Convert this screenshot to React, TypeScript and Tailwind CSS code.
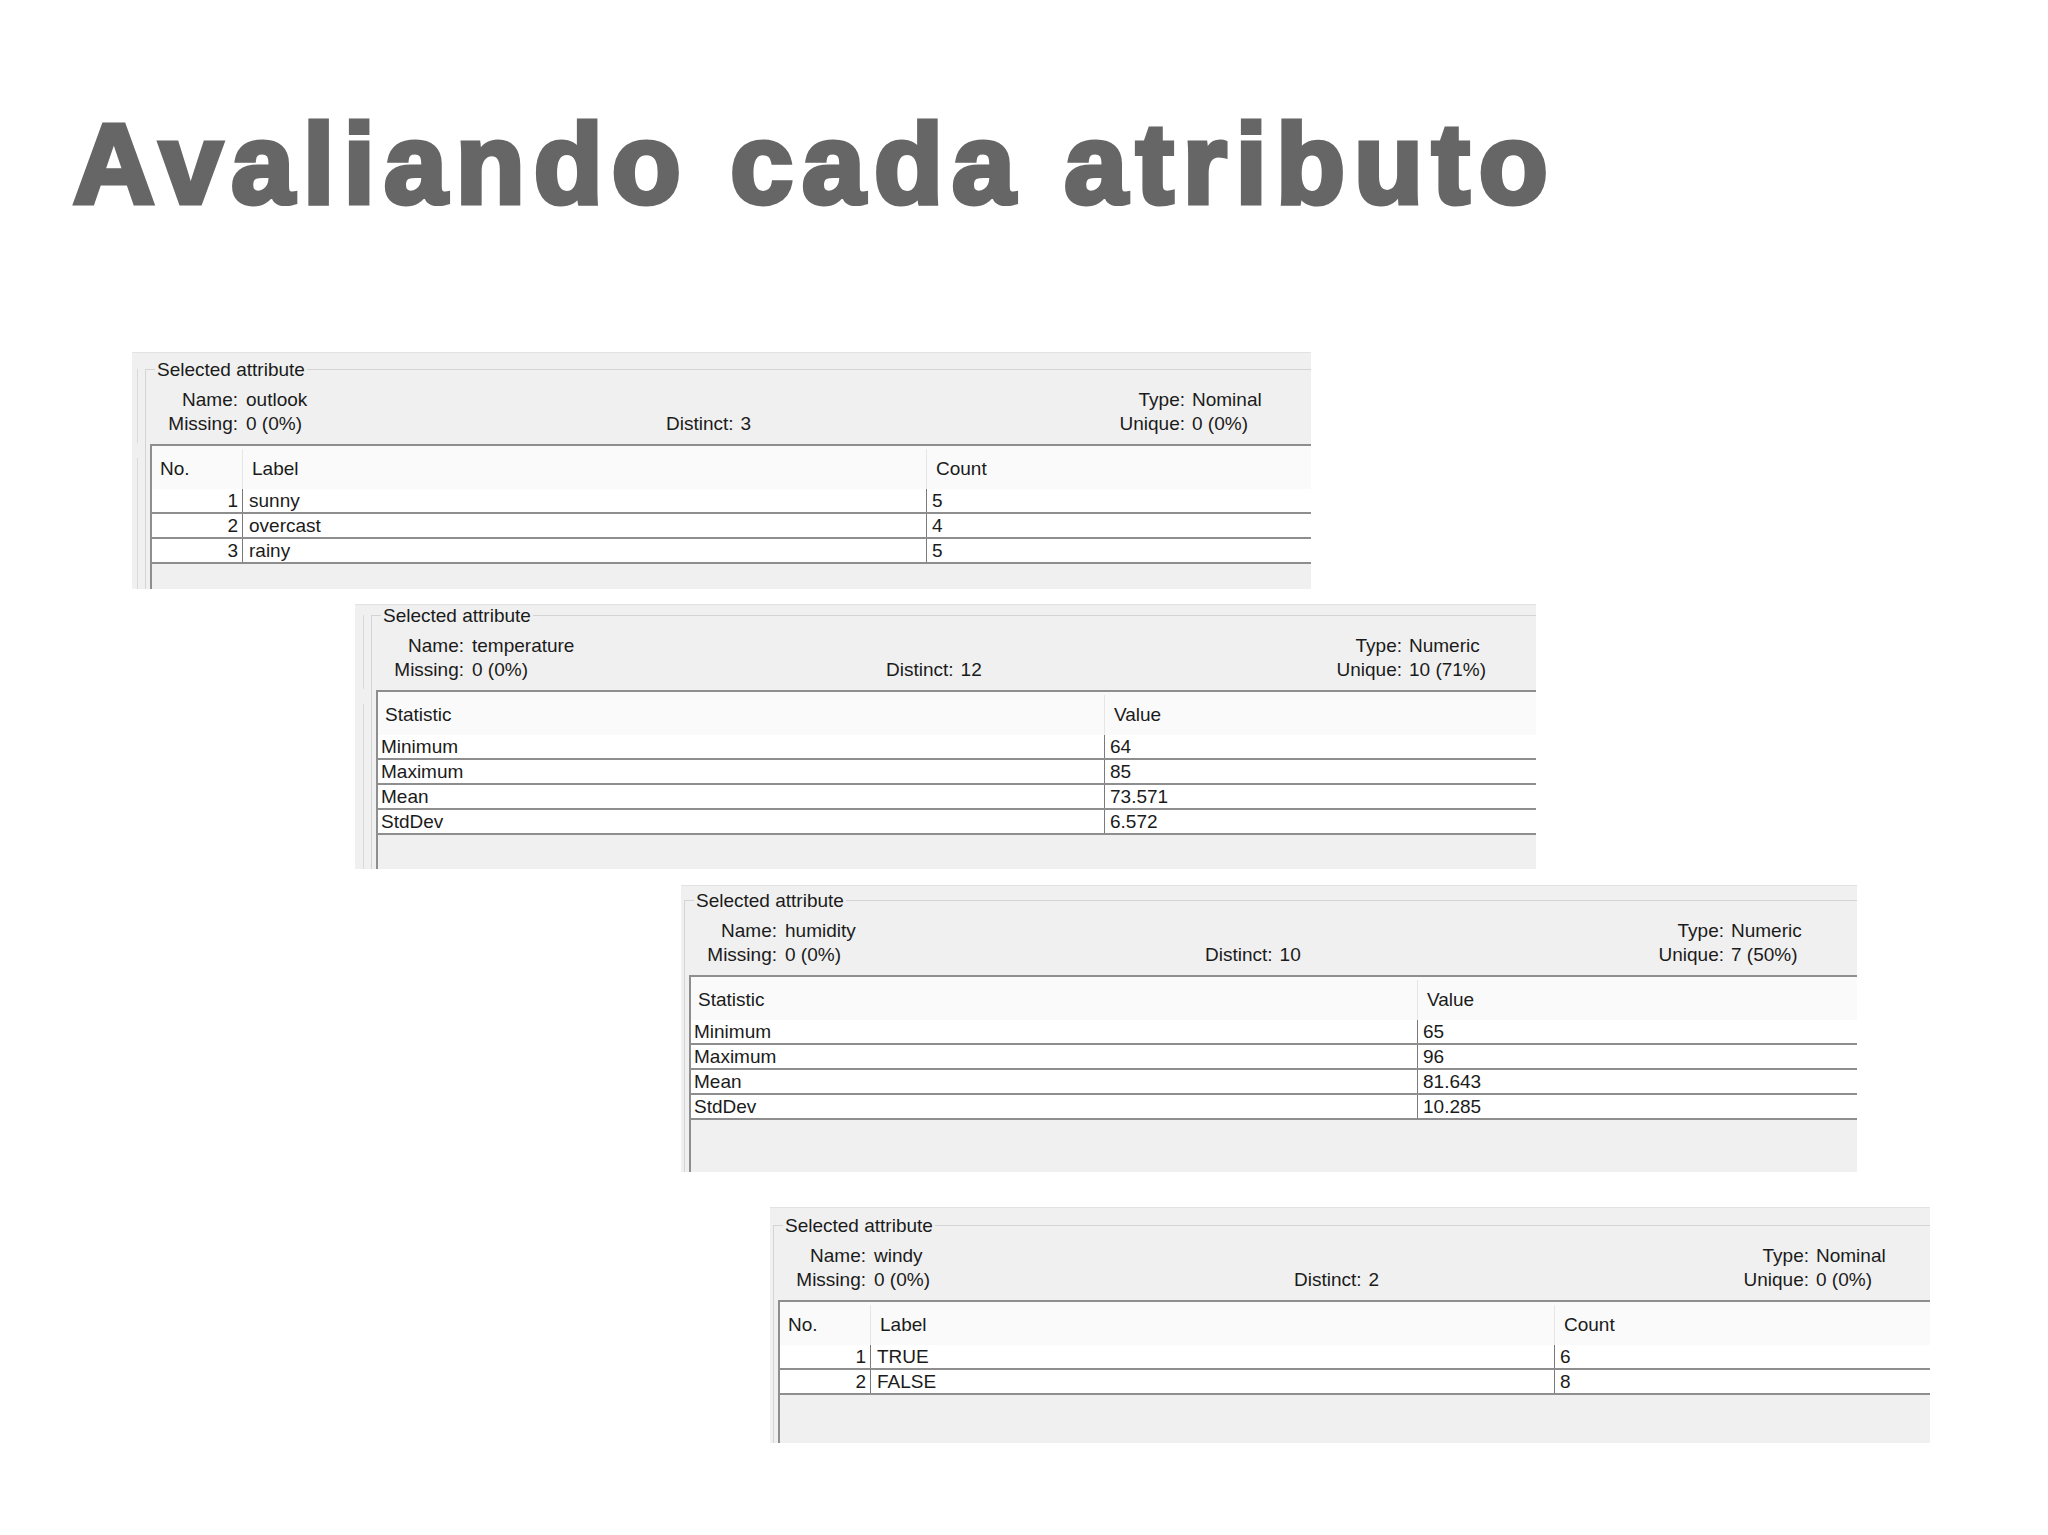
import React from "react"

type Panel = {
  key: string
  wrap: string
  gutter: string
  top: string
  line?: string
  valueCol: string
  spacer: string
  name: string
  missing: string
  distinct: string
  type: string
  unique: string
  numeric: boolean
  rows: string[][]
}

const panels: Panel[] = [
  {
    key: "outlook",
    wrap: "ml-[132px] mt-[131px] w-[1179px] h-[237px]",
    gutter: "w-[13px]",
    top: "pt-[16px]",
    line: "ml-[5px]",
    valueCol: "w-[420px]",
    spacer: "w-[420px]",
    name: "outlook",
    missing: "0 (0%)",
    distinct: "3",
    type: "Nominal",
    unique: "0 (0%)",
    numeric: false,
    rows: [
      ["1", "sunny", "5"],
      ["2", "overcast", "4"],
      ["3", "rainy", "5"],
    ],
  },
  {
    key: "temperature",
    wrap: "ml-[355px] mt-[15px] w-[1181px] h-[265px]",
    gutter: "w-[16px]",
    top: "pt-[10px]",
    line: "ml-[8px]",
    valueCol: "w-[414px]",
    spacer: "w-[417px]",
    name: "temperature",
    missing: "0 (0%)",
    distinct: "12",
    type: "Numeric",
    unique: "10 (71%)",
    numeric: true,
    rows: [
      ["Minimum", "64"],
      ["Maximum", "85"],
      ["Mean", "73.571"],
      ["StdDev", "6.572"],
    ],
  },
  {
    key: "humidity",
    wrap: "ml-[681px] mt-[16px] w-[1176px] h-[287px]",
    gutter: "w-[3px]",
    top: "pt-[14px]",
    valueCol: "w-[420px]",
    spacer: "w-[420px]",
    name: "humidity",
    missing: "0 (0%)",
    distinct: "10",
    type: "Numeric",
    unique: "7 (50%)",
    numeric: true,
    rows: [
      ["Minimum", "65"],
      ["Maximum", "96"],
      ["Mean", "81.643"],
      ["StdDev", "10.285"],
    ],
  },
  {
    key: "windy",
    wrap: "ml-[770px] mt-[35px] w-[1160px] h-[236px]",
    gutter: "w-[3px]",
    top: "pt-[17px]",
    valueCol: "w-[420px]",
    spacer: "w-[416px]",
    name: "windy",
    missing: "0 (0%)",
    distinct: "2",
    type: "Nominal",
    unique: "0 (0%)",
    numeric: false,
    rows: [
      ["1", "TRUE", "6"],
      ["2", "FALSE", "8"],
    ],
  },
]

function AttributePanel({ p }: { p: Panel }) {
  return (
    <div className={`flex shrink-0 overflow-hidden border-t border-[#e2e2e2] bg-[#f0f0f0] ${p.wrap}`}>
      {/* left gutter, a cut-off neighbour border */}
      <div className={`flex shrink-0 flex-col ${p.gutter} ${p.top}`}>
        {p.line && (
          <>
            <div className={`h-[74px] w-px bg-[#d9d9d9] ${p.line}`} />
            <div className={`mt-[15px] w-px flex-1 bg-[#d9d9d9] ${p.line}`} />
          </>
        )}
      </div>

      <div className={`flex flex-1 flex-col ${p.top}`}>
        <div className="relative flex flex-1 flex-col border-l border-t border-[#d4d4d4] pl-[4px]">
          <span className="absolute left-[9px] top-[-12px] bg-[#f0f0f0] px-[2px] leading-[24px]">
            Selected attribute
          </span>

          <div className="pt-[18px] pb-[8px]">
            <div className="flex h-[24px] items-center whitespace-nowrap">
              <span className="w-[88px] shrink-0 text-right">Name:</span>
              <span className={`ml-[8px] shrink-0 ${p.valueCol}`}>{p.name}</span>
              <span className={`shrink-0 ${p.spacer}`} />
              <span className="w-[99px] shrink-0 text-right">Type:</span>
              <span className="ml-[7px]">{p.type}</span>
            </div>
            <div className="flex h-[24px] items-center whitespace-nowrap">
              <span className="w-[88px] shrink-0 text-right">Missing:</span>
              <span className={`ml-[8px] shrink-0 ${p.valueCol}`}>{p.missing}</span>
              <span className={`shrink-0 ${p.spacer}`}>
                Distinct:<span className="ml-[7px]">{p.distinct}</span>
              </span>
              <span className="w-[99px] shrink-0 text-right">Unique:</span>
              <span className="ml-[7px]">{p.unique}</span>
            </div>
          </div>

          <div className="flex flex-1 flex-col border-l-2 border-[#8e8e8e]">
            <div className="flex h-[45px] shrink-0 border-t-2 border-[#8e8e8e] bg-[#fafafa] pt-[3px]">
              {p.numeric ? (
                <>
                  <div className="flex w-[727px] shrink-0 items-center border-r border-[#e6e6e6] pl-[7px]">Statistic</div>
                  <div className="flex flex-1 items-center pl-[9px]">Value</div>
                </>
              ) : (
                <>
                  <div className="flex w-[91px] shrink-0 items-center border-r border-[#e6e6e6] pl-[8px]">No.</div>
                  <div className="flex w-[684px] shrink-0 items-center border-r border-[#e6e6e6] pl-[9px]">Label</div>
                  <div className="flex flex-1 items-center pl-[9px]">Count</div>
                </>
              )}
            </div>

            {p.rows.map((r) =>
              p.numeric ? (
                <div key={r[0]} className="flex h-[25px] shrink-0 border-b-2 border-[#8e8e8e] bg-white">
                  <div className="flex w-[727px] shrink-0 items-center border-r border-[#7a7a7a] pl-[3px]">{r[0]}</div>
                  <div className="flex flex-1 items-center pl-[5px]">{r[1]}</div>
                </div>
              ) : (
                <div key={r[0]} className="flex h-[25px] shrink-0 border-b-2 border-[#8e8e8e] bg-white">
                  <div className="flex w-[91px] shrink-0 items-center justify-end border-r border-[#7a7a7a] pr-[4px]">{r[0]}</div>
                  <div className="flex w-[684px] shrink-0 items-center border-r border-[#7a7a7a] pl-[6px]">{r[1]}</div>
                  <div className="flex flex-1 items-center pl-[5px]">{r[2]}</div>
                </div>
              )
            )}

            <div className="flex-1" />
          </div>
        </div>
      </div>
    </div>
  )
}

export default function App() {
  return (
    <div className="flex h-[1535px] w-[2048px] flex-col overflow-hidden bg-white font-['Liberation_Sans',Arial,sans-serif] text-[19px] leading-[24px] text-[#1b1b1b]">
      <h1 className="whitespace-nowrap pl-[73px] pt-[108px] text-[113px] font-bold leading-[113px] tracking-[9px] text-[#666666] [-webkit-text-stroke:5px_#666666]">
        Avaliando cada atributo
      </h1>

      {panels.map((p) => (
        <AttributePanel key={p.key} p={p} />
      ))}
    </div>
  )
}
